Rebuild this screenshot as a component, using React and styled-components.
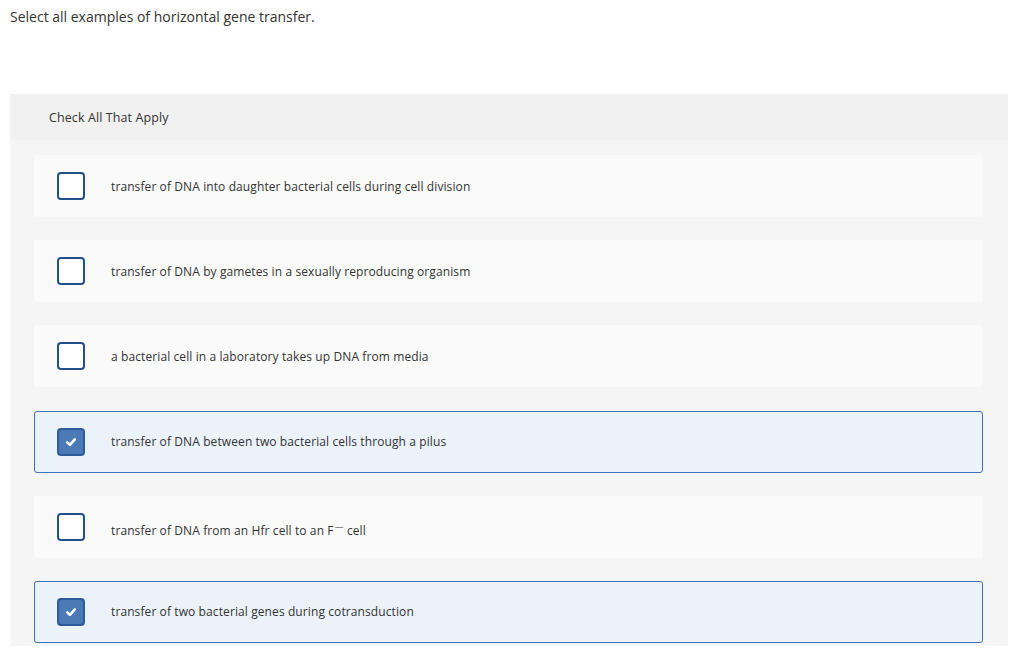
import React, { useState } from "react";
import styled, { createGlobalStyle } from "styled-components";

const GlobalStyle = createGlobalStyle`
  body {
    margin: 0;
    background: #ffffff;
    font-family: "Open Sans", Lato, "Liberation Sans", sans-serif;
    color: #333333;
  }
`;

const OPTIONS = [
  { id: 1, label: "transfer of DNA into daughter bacterial cells during cell division", checked: false },
  { id: 2, label: "transfer of DNA by gametes in a sexually reproducing organism", checked: false },
  { id: 3, label: "a bacterial cell in a laboratory takes up DNA from media", checked: false },
  { id: 4, label: "transfer of DNA between two bacterial cells through a pilus", checked: true },
  { id: 5, label: "transfer of DNA from an Hfr cell to an F", sup: "—", after: " cell", checked: false },
  { id: 6, label: "transfer of two bacterial genes during cotransduction", checked: true },
];

const App = () => {
  const [items, setItems] = useState(OPTIONS);

  const toggle = (id) => {
    setItems((prev) => prev.map((o) => (o.id === id ? { ...o, checked: !o.checked } : o)));
  };

  return (
    <Page>
      <GlobalStyle />
      <Prompt>Select all examples of horizontal gene transfer.</Prompt>
      <Panel>
        <PanelHeader>Check All That Apply</PanelHeader>
        <OptionList>
          {items.map((o) => (
            <Option key={o.id} $checked={o.checked} onClick={() => toggle(o.id)}>
              <Box $checked={o.checked}>
                {o.checked && (
                  <svg width="14" height="14" viewBox="0 0 14 14">
                    <path
                      d="M3.2 7.4 L5.9 9.9 L10.8 4.4"
                      fill="none"
                      stroke="#ffffff"
                      strokeWidth="2.6"
                      strokeLinecap="round"
                      strokeLinejoin="round"
                    />
                  </svg>
                )}
              </Box>
              <Label $lower={!!o.sup}>
                {o.label}
                {o.sup && <Sup>{o.sup}</Sup>}
                {o.after}
              </Label>
            </Option>
          ))}
        </OptionList>
      </Panel>
    </Page>
  );
};

export default App;

const Page = styled.div`
  padding: 8px 16px 0 10px;
`;

const Prompt = styled.p`
  margin: 0;
  font-size: 14px;
  line-height: 18px;
  color: #333333;
`;

const Panel = styled.section`
  margin-top: 68px;
  background: #f5f5f5;
`;

const PanelHeader = styled.div`
  height: 46px;
  display: flex;
  align-items: center;
  padding-left: 39px;
  background: #f1f1f1;
  font-size: 12.5px;
  letter-spacing: 0.1px;
  color: #333333;
`;

const OptionList = styled.div`
  display: flex;
  flex-direction: column;
  gap: 23.2px;
  padding: 15px 25px 3px 24px;
`;

const Option = styled.div`
  height: 62px;
  box-sizing: border-box;
  display: flex;
  align-items: center;
  padding-left: ${(p) => (p.$checked ? "22px" : "23px")};
  background: ${(p) => (p.$checked ? "#ebf2fa" : "#fafafa")};
  border: ${(p) => (p.$checked ? "1px solid #3f72b8" : "none")};
  border-radius: 3px;
  cursor: pointer;
`;

const Box = styled.span`
  width: 28px;
  height: 28px;
  box-sizing: border-box;
  flex-shrink: 0;
  display: flex;
  align-items: center;
  justify-content: center;
  border: 2px solid #204f8a;
  border-radius: 4px;
  background: ${(p) => (p.$checked ? "#4a79b6" : "#ffffff")};
  border-color: ${(p) => (p.$checked ? "#2e5c98" : "#204f8a")};
`;

const Label = styled.span`
  margin-left: 26px;
  margin-top: ${(p) => (p.$lower ? "8px" : "0")};
  font-size: 12px;
  letter-spacing: 0.1px;
  color: #333333;
`;

const Sup = styled.sup`
  font-size: 9px;
  line-height: 0;
  margin-left: 1px;
`;
